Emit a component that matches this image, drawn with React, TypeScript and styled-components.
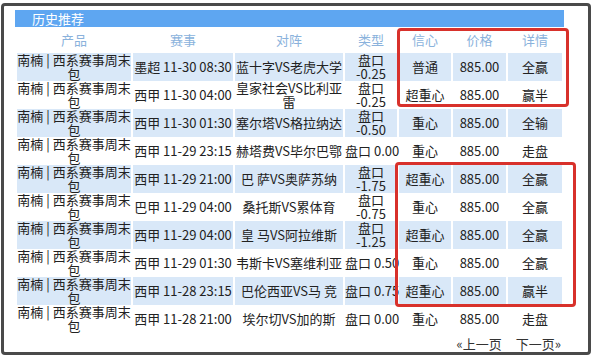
import React from "react";
import styled, { createGlobalStyle } from "styled-components";

const Global = createGlobalStyle`
  html, body { margin: 0; padding: 0; background: #ffffff; }
  body { font-family: "Noto Sans CJK SC", "Noto Sans", sans-serif; }
`;

const Page = styled.div`
  position: relative;
  width: 592px;
  height: 357px;
  overflow: hidden;
  background: #ffffff;
`;

const Frame = styled.div`
  box-sizing: border-box;
  margin: 3px 1px 0 1px;
  width: 590px;
  height: 352px;
  border: 3px solid #4a4a4a;
  border-radius: 4px;
  padding: 4px 0 0 11px;
  background: #ffffff;
`;

const TitleBar = styled.div`
  box-sizing: border-box;
  width: 549px;
  height: 17px;
  background: #5ea6f1;
  color: #ffffff;
  font-size: 13px;
  line-height: 17px;
  padding-left: 17px;
`;

const Table = styled.table`
  width: 549px;
  table-layout: fixed;
  border-collapse: separate;
  border-spacing: 2px 0;
  margin: 0;
  font-size: 13px;
  line-height: 14px;
  color: #222222;
`;

const HeadCell = styled.th`
  height: 26px;
  padding: 0;
  font-weight: normal;
  text-align: center;
  vertical-align: middle;
  color: #8ab2dc;
`;

const Row = styled.tr<{ $shaded: boolean }>`
  height: 27.7px;
  background: transparent;
  & > td {
    background: ${(p) => (p.$shaded ? "#d9e8f8" : "#ffffff")};
  }
`;

const Cell = styled.td`
  padding: 0;
  text-align: center;
  vertical-align: middle;
  overflow: visible;
`;

const Line = styled.span`
  display: block;
  white-space: nowrap;
`;

const Pager = styled.div`
  display: flex;
  justify-content: flex-end;
  gap: 14px;
  width: 546px;
  margin-top: 4px;
  font-size: 13px;
  line-height: 14px;
  color: #333333;
`;

const PagerLink = styled.span`
  white-space: nowrap;
`;

const Highlight = styled.div<{ $l: number; $t: number; $w: number; $h: number }>`
  position: absolute;
  box-sizing: border-box;
  left: ${(p) => p.$l}px;
  top: ${(p) => p.$t}px;
  width: ${(p) => p.$w}px;
  height: ${(p) => p.$h}px;
  border: 3px solid #d8312b;
  border-radius: 4px;
  pointer-events: none;
`;

type RowData = {
  match: string;
  teams: string[];
  type: string[];
  conf: string;
  price: string;
  result: string;
};

const product = ["南楠 | 西系赛事周末", "包"];

const rows: RowData[] = [
  { match: "墨超 11-30 08:30", teams: ["蓝十字VS老虎大学"], type: ["盘口", "-0.25"], conf: "普通", price: "885.00", result: "全赢" },
  { match: "西甲 11-30 04:00", teams: ["皇家社会VS比利亚", "雷"], type: ["盘口", "-0.25"], conf: "超重心", price: "885.00", result: "赢半" },
  { match: "西甲 11-30 01:30", teams: ["塞尔塔VS格拉纳达"], type: ["盘口", "-0.50"], conf: "重心", price: "885.00", result: "全输" },
  { match: "西甲 11-29 23:15", teams: ["赫塔费VS毕尔巴鄂"], type: ["盘口 0.00"], conf: "重心", price: "885.00", result: "走盘" },
  { match: "西甲 11-29 21:00", teams: ["巴 萨VS奥萨苏纳"], type: ["盘口", "-1.75"], conf: "超重心", price: "885.00", result: "全赢" },
  { match: "巴甲 11-29 04:00", teams: ["桑托斯VS累体育"], type: ["盘口", "-0.75"], conf: "重心", price: "885.00", result: "全赢" },
  { match: "西甲 11-29 04:00", teams: ["皇 马VS阿拉维斯"], type: ["盘口", "-1.25"], conf: "超重心", price: "885.00", result: "全赢" },
  { match: "西甲 11-29 01:30", teams: ["韦斯卡VS塞维利亚"], type: ["盘口 0.50"], conf: "重心", price: "885.00", result: "全赢" },
  { match: "西甲 11-28 23:15", teams: ["巴伦西亚VS马 竞"], type: ["盘口 0.75"], conf: "超重心", price: "885.00", result: "赢半" },
  { match: "西甲 11-28 21:00", teams: ["埃尔切VS加的斯"], type: ["盘口 0.00"], conf: "重心", price: "885.00", result: "走盘" },
];

const widths = [114, 100, 108, 52, 52, 53, 54];
const heads = ["产品", "赛事", "对阵", "类型", "信心", "价格", "详情"];

const Lines: React.FC<{ items: string[] }> = ({ items }) => (
  <>
    {items.map((t, i) => (
      <Line key={i}>{t}</Line>
    ))}
  </>
);

export default function App() {
  return (
    <Page>
      <Global />
      <Frame>
        <TitleBar>历史推荐</TitleBar>
        <Table>
          <colgroup>
            {widths.map((w, i) => (
              <col key={i} style={{ width: w }} />
            ))}
          </colgroup>
          <thead>
            <tr>
              {heads.map((h) => (
                <HeadCell key={h}>{h}</HeadCell>
              ))}
            </tr>
          </thead>
          <tbody>
            {rows.map((r, i) => (
              <Row key={i} $shaded={i % 2 === 0}>
                <Cell>
                  <Lines items={product} />
                </Cell>
                <Cell>
                  <Line>{r.match}</Line>
                </Cell>
                <Cell>
                  <Lines items={r.teams} />
                </Cell>
                <Cell>
                  <Lines items={r.type} />
                </Cell>
                <Cell>
                  <Line>{r.conf}</Line>
                </Cell>
                <Cell>
                  <Line>{r.price}</Line>
                </Cell>
                <Cell>
                  <Line>{r.result}</Line>
                </Cell>
              </Row>
            ))}
          </tbody>
        </Table>
        <Pager>
          <PagerLink>«上一页</PagerLink>
          <PagerLink>下一页»</PagerLink>
        </Pager>
      </Frame>
      <Highlight $l={397} $t={28} $w={172} $h={79} />
      <Highlight $l={395} $t={162} $w={181} $h={145} />
    </Page>
  );
}
